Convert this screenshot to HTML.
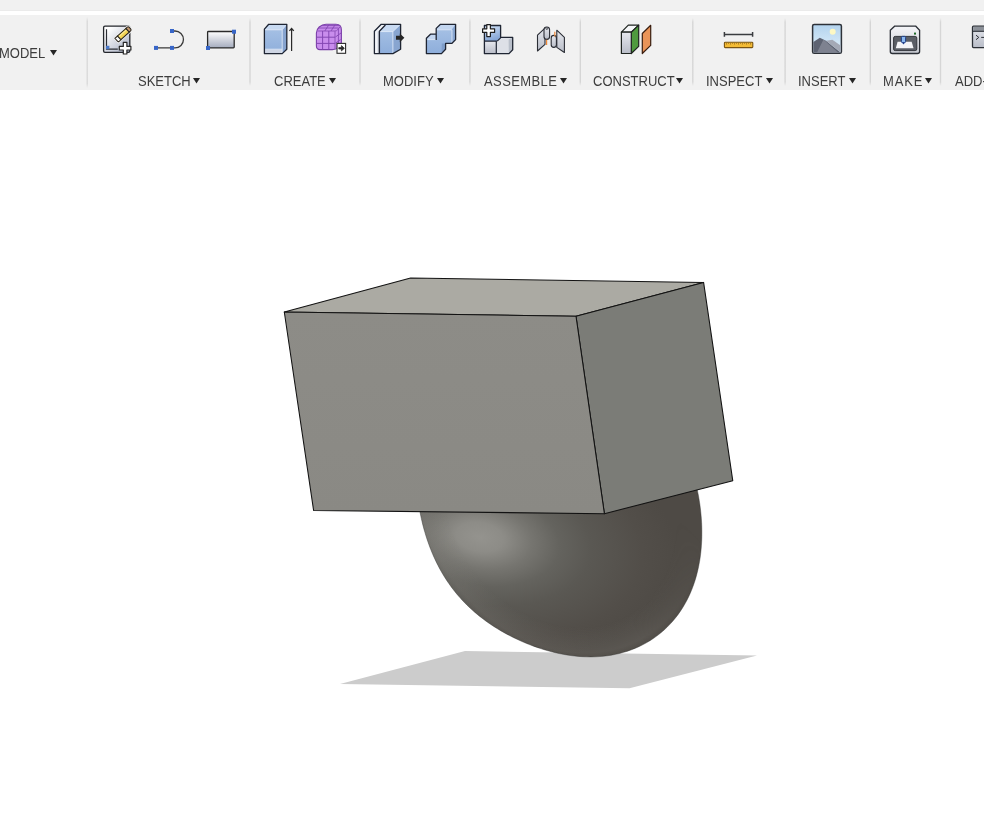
<!DOCTYPE html>
<html><head><meta charset="utf-8">
<style>
html,body{margin:0;padding:0;width:984px;height:833px;overflow:hidden;background:#fff;}
body{position:relative;font-family:"Liberation Sans",sans-serif;}
#top{position:absolute;left:0;top:0;width:984px;height:10px;background:#f1f1f1;border-bottom:1px solid #ebebeb;}
#tb{position:absolute;left:0;top:15px;width:984px;height:75px;background:#f1f1f1;}
.sep{position:absolute;top:17px;width:1px;height:71px;background:#d9d9d9;}
.lbl{position:absolute;top:74px;font-size:13px;color:#3c3c3c;white-space:nowrap;line-height:15px;transform:scaleY(1.1);transform-origin:0 11.5px;}
.tri{position:absolute;width:7px;height:5.5px;background:#262626;clip-path:polygon(0 0,100% 0,50% 100%);}
svg.ic{position:absolute;overflow:visible;}
#scene{position:absolute;left:0;top:0;}
</style></head>
<body>
<div id="top"></div>
<div id="tb"></div>

<svg width="984" height="90" style="position:absolute;left:0;top:0">
  <defs><linearGradient id="gSep" x1="0" y1="0" x2="0" y2="1"><stop offset="0" stop-color="#d6d6d6" stop-opacity="0"/><stop offset="0.06" stop-color="#d6d6d6"/><stop offset="0.94" stop-color="#d6d6d6"/><stop offset="1" stop-color="#d6d6d6" stop-opacity="0"/></linearGradient></defs>
  <rect x="86.6" y="17" width="1.2" height="71" fill="url(#gSep)"/>
  <rect x="249.3" y="18" width="1.4" height="68" fill="url(#gSep)"/>
  <rect x="359.3" y="18" width="1.4" height="68" fill="url(#gSep)"/>
  <rect x="469.2" y="18" width="1.4" height="68" fill="url(#gSep)"/>
  <rect x="579.6" y="18" width="1.4" height="68" fill="url(#gSep)"/>
  <rect x="692.1" y="18" width="1.4" height="68" fill="url(#gSep)"/>
  <rect x="784.4" y="18" width="1.4" height="68" fill="url(#gSep)"/>
  <rect x="869.6" y="18" width="1.4" height="68" fill="url(#gSep)"/>
  <rect x="939.8" y="18" width="1.4" height="68" fill="url(#gSep)"/>
</svg>
<div class="lbl" style="left:-1px;top:46px">MODEL</div><div class="tri" style="left:50px;top:50px"></div>
<div class="lbl" style="left:138px">SKETCH</div><div class="tri" style="left:193px;top:78px"></div>
<div class="lbl" style="left:274px">CREATE</div><div class="tri" style="left:329px;top:78px"></div>
<div class="lbl" style="left:383px">MODIFY</div><div class="tri" style="left:437px;top:78px"></div>
<div class="lbl" style="left:484px;letter-spacing:0.4px">ASSEMBLE</div><div class="tri" style="left:560px;top:78px"></div>
<div class="lbl" style="left:593px">CONSTRUCT</div><div class="tri" style="left:676px;top:78px"></div>
<div class="lbl" style="left:706px">INSPECT</div><div class="tri" style="left:766px;top:78px"></div>
<div class="lbl" style="left:798px">INSERT</div><div class="tri" style="left:849px;top:78px"></div>
<div class="lbl" style="left:883px;letter-spacing:0.9px">MAKE</div><div class="tri" style="left:925px;top:78px"></div>
<div class="lbl" style="left:955px">ADD-INS</div>

<svg id="icons" width="984" height="90" viewBox="0 0 984 90" style="position:absolute;left:0;top:0">
  <defs>
    <linearGradient id="gSk" x1="0" y1="0" x2="1" y2="1">
      <stop offset="0.15" stop-color="#ffffff"/><stop offset="1" stop-color="#a3abc0"/>
    </linearGradient>
    <linearGradient id="gRect" x1="0" y1="0" x2="0" y2="1">
      <stop offset="0" stop-color="#ffffff"/><stop offset="1" stop-color="#a4abbd"/>
    </linearGradient>
    <linearGradient id="gBlueF" x1="0" y1="0" x2="0" y2="1">
      <stop offset="0" stop-color="#a9c3e6"/><stop offset="1" stop-color="#8eaedb"/>
    </linearGradient>
    <linearGradient id="gNcB" x1="0" y1="0" x2="0.3" y2="1"><stop offset="0" stop-color="#d2e2f6"/><stop offset="1" stop-color="#86a6d6"/></linearGradient>
    <linearGradient id="gGray" x1="0" y1="0" x2="0" y2="1">
      <stop offset="0" stop-color="#e6e8ee"/><stop offset="1" stop-color="#b9bdc8"/>
    </linearGradient>
    <linearGradient id="gSky" x1="0" y1="0" x2="0" y2="1">
      <stop offset="0" stop-color="#b3d3ee"/><stop offset="1" stop-color="#e2f1fb"/>
    </linearGradient>
    <linearGradient id="gPrn" x1="0" y1="0" x2="0" y2="1">
      <stop offset="0" stop-color="#f4f5f8"/><stop offset="1" stop-color="#c9ccd4"/>
    </linearGradient>
  </defs>
  <!-- Sketch: create sketch -->
  <g>
    <rect x="103.6" y="26.2" width="26.2" height="26.2" rx="1.4" fill="url(#gSk)" stroke="#24272c" stroke-width="1.3"/>
    <path d="M106.5 29.3 V49.2 H117.8" fill="none" stroke="#2a2d33" stroke-width="1.2"/>
    <rect x="106" y="45.8" width="3.4" height="3.4" fill="#4a78c8"/>
    <g transform="translate(116.6 40.2) rotate(-42)">
      <path d="M0 -2.6 H16.5 Q18 -2.6 18 -1 V1 Q18 2.6 16.5 2.6 H0 Z" fill="none" stroke="#f0f0f0" stroke-width="2.4"/>
      <path d="M3.4 -2.5 H14.8 V2.5 H3.4 Z" fill="#f3d452" stroke="#2a2620" stroke-width="1"/>
      <path d="M4 -1.1 H14.3" stroke="#fbeaa0" stroke-width="1"/>
      <path d="M14.8 -2.5 H16.6 Q18 -2.5 18 -1 V1 Q18 2.5 16.6 2.5 H14.8 Z" fill="#c49a70" stroke="#2a2620" stroke-width="1"/>
      <path d="M3.4 -2.5 V2.5 H1.2 Q0 2.5 0 1.3 V-2.5 Z" fill="#fdfdfd" stroke="#2a2620" stroke-width="1"/>
    </g>
    <path d="M123.3 42.4 h3.6 v4 h4 v3.6 h-4 v4 h-3.6 v-4 h-4 v-3.6 h4 Z" fill="#fff" stroke="#262626" stroke-width="1.2" stroke-linejoin="round"/>
  </g>
  <!-- Line/arc -->
  <g>
    <path d="M156 47.9 H175 A8.45 8.45 0 0 0 175 31 H172" fill="none" stroke="#3a3a3a" stroke-width="1.3"/>
    <rect x="154" y="45.9" width="4" height="4" fill="#3866c8"/>
    <rect x="170" y="45.9" width="4" height="4" fill="#3866c8"/>
    <rect x="170" y="29" width="4" height="4" fill="#3866c8"/>
  </g>
  <!-- Rectangle -->
  <g>
    <rect x="207.6" y="31.5" width="26.6" height="16.4" rx="0.8" fill="url(#gRect)" stroke="#2a2a2a" stroke-width="1.3"/>
    <rect x="206" y="46" width="4" height="4" fill="#3866c8"/>
    <rect x="232" y="29.7" width="4" height="4" fill="#3866c8"/>
  </g>
  <!-- Extrude -->
  <g>
    <path d="M264.4 29.1 L268.7 24.3 H286.8 V49.2 L282.2 53.6 H264.4 Z" fill="url(#gBlueF)"/>
    <path d="M265 29 L268.9 24.9 H286.2 L282.2 29.8 H265 Z" fill="#c8daf2"/>
    <path d="M282.4 29.8 L286.2 25 V49 L282.4 53 Z" fill="#86a3cf"/>
    <path d="M265 49.4 H282.2 V53 H265 Z" fill="#cfd6e4"/>
    <path d="M265 29.8 H282.2 V53 M282.2 29.8 L286.4 24.8 M265 49.2 H282.2" fill="none" stroke="#e6eefa" stroke-width="0.8"/>
    <path d="M264.4 29.1 L268.7 24.3 H286.8 V49.2 L282.2 53.6 H264.4 Z" fill="none" stroke="#1f2533" stroke-width="1.3" stroke-linejoin="round"/>
    <path d="M291.6 51 V28.6 M289.4 30.9 L291.6 28.5 L293.8 30.9" fill="none" stroke="#2a2a2a" stroke-width="1.2"/>
  </g>
  <!-- Form (purple) -->
  <g>
    <path d="M316.4 33 Q316.4 29.6 319.2 27 Q322.4 24.2 326 24.2 H336 Q341.4 24.2 341.4 30 V42 Q341.4 45.6 338.4 47.6 Q335.8 49.6 332.5 49.6 H320 Q316.4 49.6 316.4 46 Z" fill="#c98ded" stroke="#7a3fa8" stroke-width="1.1"/>
    <path d="M317.6 31 H335 Q336.6 31 337.8 29.6 L340.4 26.4" fill="none" stroke="#8a4fb6" stroke-width="0.9"/>
    <path d="M335 31.2 V49" fill="none" stroke="#8a4fb6" stroke-width="0.9"/>
    <path d="M322.6 31 V49.4 M328.8 31 V49.4 M317 37.2 H335 M317 43.4 H335" fill="none" stroke="#8447b3" stroke-width="1"/>
    <path d="M318.8 28 H338.6 M321.6 25.6 H340 M324.8 31 L329 24.6 M331 31 L335.2 24.6" fill="none" stroke="#8447b3" stroke-width="0.9"/>
    <path d="M338.4 28.6 V46.2 M335.4 37 L341 33 M335.4 43.2 L340.6 39.6" fill="none" stroke="#8447b3" stroke-width="0.9"/>
    <rect x="337" y="43.4" width="8.6" height="9.9" fill="#fff" stroke="#2a2a2a" stroke-width="1.1"/>
    <path d="M338.8 47.6 H341.4 V45.6 L344.4 48.3 L341.4 51 V49 H338.8 Z" fill="#2a2a2a" stroke="#2a2a2a" stroke-width="0.7" stroke-linejoin="round"/>
  </g>
  <!-- Press pull -->
  <g>
    <path d="M374.4 31.2 L381.2 24.3 H400.6 V49.2 L392.9 53.6 H374.4 Z" fill="url(#gBlueF)"/>
    <path d="M375 31.2 L381.4 24.9 H385.4 L379.4 31.2 V53 H375 Z" fill="#f3f5f9"/>
    <path d="M377.6 31.4 H379.2 V53 H377.6 Z" fill="#c9ced8"/>
    <path d="M379.8 31.6 L385.6 25 H400 L393 31.6 Z" fill="#c8daf2"/>
    <path d="M393 31.6 L400 25 V49 L393 53 Z" fill="#88a5d0"/>
    <path d="M380 31.6 H392.9 V53 M392.9 31.6 L399.8 25" fill="none" stroke="#e6eefa" stroke-width="0.8"/>
    <path d="M374.4 31.2 L381.2 24.3 H400.6 V49.2 L392.9 53.6 H374.4 Z M379.4 53.4 V31.2 L385.4 25" fill="none" stroke="#1f2533" stroke-width="1.3" stroke-linejoin="round"/>
    <path d="M396 35.8 H399.8 V33.4 L404.4 37.8 L399.8 42.2 V39.8 H396 Z" fill="#262626"/>
  </g>
  <!-- Combine -->
  <g>
    <path id="cmb" d="M426.4 38.3 L430.5 34.2 H436.2 V28.4 L440.5 24.3 H455.6 V39.6 L452 43.3 H445.6 V49.2 L441.5 53.6 H426.4 Z" fill="url(#gBlueF)"/>
    <path d="M427 38.2 L430.6 34.8 H436.2 V39.6 H427 Z" fill="#c3d6f0"/>
    <path d="M436.8 28.6 L440.6 24.9 H455 L451.6 29.6 H436.8 Z" fill="#c3d6f0"/>
    <path d="M452 29.8 L455.2 25 V39.4 L452 43 Z" fill="#88a6d1"/>
    <path d="M441.8 43.4 H445.4 V49 L441.6 53 Z" fill="#7f9dc9"/>
    <path d="M427.3 39.6 H436.2 M436.9 29.8 H451.8 M452 30 V43" fill="none" stroke="#e4eefa" stroke-width="0.8"/>
    <path d="M426.4 38.3 L430.5 34.2 H436.2 V28.4 L440.5 24.3 H455.6 V39.6 L452 43.3 H445.6 V49.2 L441.5 53.6 H426.4 Z M436.2 34.2 V40" fill="none" stroke="#1f2533" stroke-width="1.3" stroke-linejoin="round"/>
  </g>
  <!-- New component -->
  <g>
    <path d="M484.4 25.5 H500.6 V41 L497.2 41.2 H484.4 Z" fill="url(#gNcB)"/>
    <path d="M484.4 41.2 H496.3 V53.6 H484.4 Z" fill="url(#gGray)"/>
    <path d="M496.3 41.2 L500.6 37.4 H512.7 V49.7 L509 53.6 H496.3 Z" fill="#dde0e7"/>
    <path d="M508.6 39.4 L512.2 37.8 V49.5 L508.8 52.6 Z" fill="#b9bfca"/>
    <path d="M484.4 41.2 H496.3 V53.6 M497.2 41.2 L500.6 37.8" fill="none" stroke="#1f2533" stroke-width="1.2"/>
    <path d="M484.4 25.5 H500.6 V37.4 H512.7 V49.7 L509 53.6 H484.4 Z" fill="none" stroke="#1f2533" stroke-width="1.3" stroke-linejoin="round"/>
    <path d="M486.8 24.6 h3.6 v4.2 h4.2 v3.6 h-4.2 v4.2 h-3.6 v-4.2 h-4.2 v-3.6 h4.2 Z" fill="#fff" stroke="#1f1f1f" stroke-width="1.2" stroke-linejoin="round"/>
  </g>
  <!-- Joint -->
  <g stroke="#2a2d35" stroke-width="1.1" stroke-linejoin="round">
    <path d="M537.5 35.2 L545 28.2 V44.4 L537.5 51 Z" fill="url(#gGray)"/>
    <rect x="544" y="27" width="5.6" height="12.4" rx="2.8" fill="url(#gGray)"/>
    <ellipse cx="546.8" cy="28.6" rx="1" ry="0.8" fill="#fff" stroke="#2a2d35" stroke-width="0.8"/>
    <path d="M546.6 39.8 V44.9" stroke="#f08a3a" stroke-width="1.2"/>
    <path d="M556.8 30.2 L564.4 37.3 V52.5 L556.8 47.4 Z" fill="url(#gGray)"/>
    <rect x="551.2" y="35.4" width="5.2" height="12" rx="2.6" fill="url(#gGray)"/>
    <path d="M554.8 31.8 V36.6" stroke="#f08a3a" stroke-width="1.2"/>
  </g>
  <!-- Construct -->
  <g stroke="#1f2420" stroke-width="1.2" stroke-linejoin="round">
    <path d="M621.4 32.2 L628.3 25.1 H638.7 L631.3 32.2 Z" fill="#f6f7f9"/>
    <path d="M631.3 32.2 L638.7 25.1 V46.4 L631.3 53.5 Z" fill="#4f9a3e"/>
    <path d="M621.4 32.2 H631.3 V53.5 H621.4 Z" fill="url(#gGray)"/>
    <path d="M642.3 33.5 L650.7 25.3 V45.4 L642.3 53.5 Z" fill="#ea9458" stroke="#3a1e10"/>
  </g>
  <!-- Measure -->
  <g>
    <path d="M724.4 34.4 H752.6 M724.4 32 V36.8 M752.6 32 V36.8" fill="none" stroke="#3a3c40" stroke-width="1.5"/>
    <rect x="724.4" y="42.3" width="28.4" height="5.3" rx="0.8" fill="#f3bb34" stroke="#7a5410" stroke-width="1.1"/>
    <path d="M726.5 42.8 V44.6 M728.5 42.8 V44 M730.5 42.8 V44.6 M732.5 42.8 V44 M734.5 42.8 V44.6 M736.5 42.8 V44 M738.5 42.8 V44.6 M740.5 42.8 V44 M742.5 42.8 V44.6 M744.5 42.8 V44 M746.5 42.8 V44.6 M748.5 42.8 V44 M750.5 42.8 V44.6" stroke="#9a6c18" stroke-width="0.7"/>
  </g>
  <!-- Insert image -->
  <g>
    <rect x="812.6" y="24.5" width="28.8" height="28.8" rx="1.6" fill="url(#gSky)" stroke="#2d3138" stroke-width="1.5"/>
    <circle cx="832.7" cy="31.8" r="3" fill="#fdf8c4"/>
    <path d="M813.4 42 L819.8 37.8 L826 40.8 L840.6 52.6 H813.4 Z" fill="#5e6372"/>
    <path d="M826 40.8 L832.4 39.8 L840.6 45.6 V52.6 Z" fill="#a4a9b6"/>
    <path d="M823.5 39.5 L838 52.6 H817 Z" fill="#8b909d" opacity="0.7"/>
  </g>
  <!-- Make (3D print) -->
  <g>
    <path d="M890.3 30.3 L894.6 26.2 H915.8 L919.6 30.3 V51.4 Q919.6 53.5 917.4 53.5 H892.4 Q890.3 53.5 890.3 51.4 Z" fill="url(#gPrn)" stroke="#2b2f36" stroke-width="1.3"/>
    <rect x="893.6" y="36.4" width="23.2" height="14.2" rx="1.6" fill="#5a5e66" stroke="#34373d" stroke-width="1"/>
    <path d="M895.8 48.2 L897.6 41.8 H911.6 L913.6 48.2 Z" fill="#f4f5f8"/>
    <rect x="901.4" y="36.4" width="4.2" height="6.2" rx="1" fill="#8ab8ee" stroke="#1d3d8a" stroke-width="1"/>
    <path d="M902 42.4 L903.5 44.6 L905 42.4 Z" fill="#1d3d8a"/>
    <rect x="914" y="32.6" width="2" height="2" fill="#1e6a2a"/>
  </g>
  <!-- Add-ins -->
  <g>
    <rect x="972.5" y="26.2" width="20" height="21.4" rx="1" fill="url(#gGray)" stroke="#2b2f36" stroke-width="1.3"/>
    <rect x="973.2" y="26.9" width="19" height="4.2" fill="#8c9199"/>
    <path d="M972.5 31.3 H992" stroke="#2b2f36" stroke-width="1.1"/>
    <path d="M976 35.2 L978.8 37.4 L976 39.7" fill="none" stroke="#2b2f36" stroke-width="1"/>
    <path d="M981.2 37.4 H986" stroke="#2b2f36" stroke-width="1"/>
  </g>
</svg>

<!-- scene -->
<svg id="scene" width="984" height="833" viewBox="0 0 984 833" style="top:0">
  <defs>
    
    <radialGradient id="rim" gradientUnits="userSpaceOnUse" cx="0" cy="0" r="1" gradientTransform="translate(480 537) rotate(10) scale(200 120)">
      <stop offset="0" stop-color="#94938e"/>
      <stop offset="0.12" stop-color="#8d8c87"/>
      <stop offset="0.26" stop-color="#767570"/>
      <stop offset="0.4" stop-color="#64635e"/>
      <stop offset="0.56" stop-color="#5a5853"/>
      <stop offset="0.82" stop-color="#524e49"/>
      <stop offset="1" stop-color="#4e4a45"/>
    </radialGradient>
    <radialGradient id="hl" gradientUnits="userSpaceOnUse" cx="0" cy="0" r="1" gradientTransform="translate(480 537) rotate(12) scale(150 80)">
      <stop offset="0" stop-color="#9a9994" stop-opacity="1"/>
      <stop offset="0.35" stop-color="#8c8b86" stop-opacity="0.75"/>
      <stop offset="1" stop-color="#6a6864" stop-opacity="0"/>
    </radialGradient>
    <radialGradient id="rimL" gradientUnits="userSpaceOnUse" cx="0" cy="0" r="1" gradientTransform="translate(559 507.5) rotate(51) scale(160.3 132.3)">
      <stop offset="0.8" stop-color="#8a8883" stop-opacity="0"/>
      <stop offset="0.97" stop-color="#8a8883" stop-opacity="0.2"/>
      <stop offset="1" stop-color="#8a8883" stop-opacity="0.1"/>
    </radialGradient>
    <linearGradient id="mkG" gradientUnits="userSpaceOnUse" x1="700" y1="540" x2="560" y2="660">
      <stop offset="0" stop-color="#000"/>
      <stop offset="0.6" stop-color="#fff"/>
      <stop offset="1" stop-color="#fff"/>
    </linearGradient>
    <mask id="mkR" maskUnits="userSpaceOnUse" x="380" y="440" width="360" height="240"><rect x="380" y="440" width="360" height="240" fill="url(#mkG)"/></mask>
    <linearGradient id="front" x1="0" y1="0" x2="0" y2="1">
      <stop offset="0" stop-color="#8d8c87"/>
      <stop offset="1" stop-color="#8a8984"/>
    </linearGradient>
  </defs>
  <polygon points="340,684 465,651 757,655.5 629.5,688.3" fill="#cccccc"/>
  <path d="M700.30,507.72 L700.72,511.43 L701.09,515.16 L701.38,518.91 L701.61,522.69 L701.77,526.49 L701.85,530.32 L701.86,534.16 L701.80,538.03 L701.65,541.92 L701.42,545.83 L701.09,549.75 L700.68,553.69 L700.16,557.64 L699.55,561.60 L698.82,565.56 L697.99,569.52 L697.03,573.47 L695.96,577.41 L694.77,581.33 L693.44,585.23 L691.99,589.10 L690.40,592.93 L688.67,596.71 L686.81,600.44 L684.81,604.11 L682.66,607.70 L680.38,611.22 L677.96,614.66 L675.40,617.99 L672.70,621.23 L669.87,624.35 L666.92,627.36 L663.84,630.24 L660.64,632.99 L657.33,635.61 L653.91,638.08 L650.39,640.41 L646.78,642.58 L643.08,644.60 L639.30,646.47 L635.46,648.18 L631.56,649.73 L627.60,651.13 L623.60,652.36 L619.56,653.45 L615.49,654.37 L611.40,655.15 L607.30,655.78 L603.20,656.27 L599.09,656.61 L594.99,656.83 L590.91,656.91 L586.84,656.87 L582.79,656.71 L578.78,656.43 L574.79,656.05 L570.83,655.56 L566.91,654.98 L563.04,654.31 L559.20,653.55 L555.40,652.70 L551.65,651.78 L547.94,650.79 L544.27,649.73 L540.65,648.60 L537.07,647.40 L533.54,646.15 L530.05,644.84 L526.61,643.47 L523.21,642.05 L519.85,640.57 L516.53,639.04 L513.25,637.46 L510.02,635.83 L506.83,634.15 L503.68,632.41 L500.58,630.63 L497.51,628.79 L494.49,626.90 L491.51,624.95 L488.58,622.96 L485.70,620.90 L482.86,618.80 L480.07,616.64 L477.33,614.42 L474.64,612.15 L472.00,609.82 L469.42,607.43 L466.89,604.99 L464.42,602.50 L462.01,599.95 L459.66,597.35 L457.37,594.69 L455.15,591.98 L452.98,589.22 L450.88,586.42 L448.85,583.56 L446.88,580.66 L444.97,577.72 L443.14,574.73 L441.36,571.70 L439.66,568.63 L438.01,565.53 L436.43,562.38 L434.92,559.20 L433.46,555.99 L432.07,552.74 L430.74,549.46 L429.47,546.15 L428.25,542.81 L427.09,539.44 L426.00,536.04 L424.95,532.60 L423.96,529.14 L423.03,525.65 L422.16,522.13 L421.34,518.57 L420.57,514.99 L419.87,511.37 L419.22,507.72 L418.64,504.04 L418.11,500.33 L417.66,496.58 L417.27,492.81 L416.95,489.00 L416.71,485.15 L416.54,481.28 L416.46,477.38 L416.47,473.46 L416.57,469.51 L416.77,465.53 L417.07,461.54 L417.48,457.54 L418.00,453.52 L418.63,449.50 L419.39,445.48 L420.28,441.46 L421.30,437.46 L422.45,433.48 L423.75,429.52 L425.18,425.60 L426.76,421.72 L428.49,417.89 L430.37,414.12 L432.39,410.42 L434.57,406.80 L436.89,403.26 L439.36,399.82 L441.97,396.48 L444.73,393.25 L447.62,390.15 L450.65,387.16 L453.80,384.31 L457.07,381.61 L460.46,379.04 L463.95,376.63 L467.54,374.36 L471.23,372.26 L474.99,370.31 L478.83,368.53 L482.74,366.91 L486.70,365.45 L490.72,364.15 L494.77,363.01 L498.85,362.02 L502.95,361.19 L507.07,360.51 L511.19,359.97 L515.31,359.57 L519.43,359.31 L523.54,359.18 L527.62,359.17 L531.69,359.28 L535.72,359.50 L539.73,359.83 L543.70,360.25 L547.63,360.77 L551.53,361.37 L555.38,362.06 L559.20,362.82 L562.97,363.65 L566.70,364.56 L570.39,365.52 L574.04,366.54 L577.64,367.62 L581.21,368.75 L584.74,369.93 L588.22,371.16 L591.68,372.44 L595.09,373.77 L598.47,375.14 L601.81,376.56 L605.12,378.03 L608.40,379.55 L611.64,381.11 L614.85,382.72 L618.03,384.39 L621.16,386.10 L624.27,387.88 L627.34,389.70 L630.36,391.59 L633.35,393.53 L636.30,395.54 L639.20,397.60 L642.06,399.73 L644.87,401.92 L647.63,404.18 L650.34,406.50 L652.98,408.89 L655.58,411.34 L658.11,413.86 L660.57,416.44 L662.97,419.09 L665.31,421.80 L667.57,424.56 L669.76,427.39 L671.88,430.28 L673.93,433.22 L675.90,436.21 L677.79,439.25 L679.60,442.35 L681.34,445.49 L683.00,448.67 L684.59,451.89 L686.10,455.16 L687.53,458.46 L688.89,461.80 L690.18,465.17 L691.39,468.57 L692.53,472.00 L693.60,475.45 L694.61,478.94 L695.54,482.45 L696.41,485.99 L697.22,489.55 L697.96,493.14 L698.64,496.75 L699.26,500.38 L699.81,504.04Z" fill="url(#rim)"/>
  <path d="M700.30,507.72 L700.72,511.43 L701.09,515.16 L701.38,518.91 L701.61,522.69 L701.77,526.49 L701.85,530.32 L701.86,534.16 L701.80,538.03 L701.65,541.92 L701.42,545.83 L701.09,549.75 L700.68,553.69 L700.16,557.64 L699.55,561.60 L698.82,565.56 L697.99,569.52 L697.03,573.47 L695.96,577.41 L694.77,581.33 L693.44,585.23 L691.99,589.10 L690.40,592.93 L688.67,596.71 L686.81,600.44 L684.81,604.11 L682.66,607.70 L680.38,611.22 L677.96,614.66 L675.40,617.99 L672.70,621.23 L669.87,624.35 L666.92,627.36 L663.84,630.24 L660.64,632.99 L657.33,635.61 L653.91,638.08 L650.39,640.41 L646.78,642.58 L643.08,644.60 L639.30,646.47 L635.46,648.18 L631.56,649.73 L627.60,651.13 L623.60,652.36 L619.56,653.45 L615.49,654.37 L611.40,655.15 L607.30,655.78 L603.20,656.27 L599.09,656.61 L594.99,656.83 L590.91,656.91 L586.84,656.87 L582.79,656.71 L578.78,656.43 L574.79,656.05 L570.83,655.56 L566.91,654.98 L563.04,654.31 L559.20,653.55 L555.40,652.70 L551.65,651.78 L547.94,650.79 L544.27,649.73 L540.65,648.60 L537.07,647.40 L533.54,646.15 L530.05,644.84 L526.61,643.47 L523.21,642.05 L519.85,640.57 L516.53,639.04 L513.25,637.46 L510.02,635.83 L506.83,634.15 L503.68,632.41 L500.58,630.63 L497.51,628.79 L494.49,626.90 L491.51,624.95 L488.58,622.96 L485.70,620.90 L482.86,618.80 L480.07,616.64 L477.33,614.42 L474.64,612.15 L472.00,609.82 L469.42,607.43 L466.89,604.99 L464.42,602.50 L462.01,599.95 L459.66,597.35 L457.37,594.69 L455.15,591.98 L452.98,589.22 L450.88,586.42 L448.85,583.56 L446.88,580.66 L444.97,577.72 L443.14,574.73 L441.36,571.70 L439.66,568.63 L438.01,565.53 L436.43,562.38 L434.92,559.20 L433.46,555.99 L432.07,552.74 L430.74,549.46 L429.47,546.15 L428.25,542.81 L427.09,539.44 L426.00,536.04 L424.95,532.60 L423.96,529.14 L423.03,525.65 L422.16,522.13 L421.34,518.57 L420.57,514.99 L419.87,511.37 L419.22,507.72 L418.64,504.04 L418.11,500.33 L417.66,496.58 L417.27,492.81 L416.95,489.00 L416.71,485.15 L416.54,481.28 L416.46,477.38 L416.47,473.46 L416.57,469.51 L416.77,465.53 L417.07,461.54 L417.48,457.54 L418.00,453.52 L418.63,449.50 L419.39,445.48 L420.28,441.46 L421.30,437.46 L422.45,433.48 L423.75,429.52 L425.18,425.60 L426.76,421.72 L428.49,417.89 L430.37,414.12 L432.39,410.42 L434.57,406.80 L436.89,403.26 L439.36,399.82 L441.97,396.48 L444.73,393.25 L447.62,390.15 L450.65,387.16 L453.80,384.31 L457.07,381.61 L460.46,379.04 L463.95,376.63 L467.54,374.36 L471.23,372.26 L474.99,370.31 L478.83,368.53 L482.74,366.91 L486.70,365.45 L490.72,364.15 L494.77,363.01 L498.85,362.02 L502.95,361.19 L507.07,360.51 L511.19,359.97 L515.31,359.57 L519.43,359.31 L523.54,359.18 L527.62,359.17 L531.69,359.28 L535.72,359.50 L539.73,359.83 L543.70,360.25 L547.63,360.77 L551.53,361.37 L555.38,362.06 L559.20,362.82 L562.97,363.65 L566.70,364.56 L570.39,365.52 L574.04,366.54 L577.64,367.62 L581.21,368.75 L584.74,369.93 L588.22,371.16 L591.68,372.44 L595.09,373.77 L598.47,375.14 L601.81,376.56 L605.12,378.03 L608.40,379.55 L611.64,381.11 L614.85,382.72 L618.03,384.39 L621.16,386.10 L624.27,387.88 L627.34,389.70 L630.36,391.59 L633.35,393.53 L636.30,395.54 L639.20,397.60 L642.06,399.73 L644.87,401.92 L647.63,404.18 L650.34,406.50 L652.98,408.89 L655.58,411.34 L658.11,413.86 L660.57,416.44 L662.97,419.09 L665.31,421.80 L667.57,424.56 L669.76,427.39 L671.88,430.28 L673.93,433.22 L675.90,436.21 L677.79,439.25 L679.60,442.35 L681.34,445.49 L683.00,448.67 L684.59,451.89 L686.10,455.16 L687.53,458.46 L688.89,461.80 L690.18,465.17 L691.39,468.57 L692.53,472.00 L693.60,475.45 L694.61,478.94 L695.54,482.45 L696.41,485.99 L697.22,489.55 L697.96,493.14 L698.64,496.75 L699.26,500.38 L699.81,504.04Z" fill="url(#rimL)" mask="url(#mkR)"/>
  <path d="M700.30,507.72 L700.72,511.43 L701.09,515.16 L701.38,518.91 L701.61,522.69 L701.77,526.49 L701.85,530.32 L701.86,534.16 L701.80,538.03 L701.65,541.92 L701.42,545.83 L701.09,549.75 L700.68,553.69 L700.16,557.64 L699.55,561.60 L698.82,565.56 L697.99,569.52 L697.03,573.47 L695.96,577.41 L694.77,581.33 L693.44,585.23 L691.99,589.10 L690.40,592.93 L688.67,596.71 L686.81,600.44 L684.81,604.11 L682.66,607.70 L680.38,611.22 L677.96,614.66 L675.40,617.99 L672.70,621.23 L669.87,624.35 L666.92,627.36 L663.84,630.24 L660.64,632.99 L657.33,635.61 L653.91,638.08 L650.39,640.41 L646.78,642.58 L643.08,644.60 L639.30,646.47 L635.46,648.18 L631.56,649.73 L627.60,651.13 L623.60,652.36 L619.56,653.45 L615.49,654.37 L611.40,655.15 L607.30,655.78 L603.20,656.27 L599.09,656.61 L594.99,656.83 L590.91,656.91 L586.84,656.87 L582.79,656.71 L578.78,656.43 L574.79,656.05 L570.83,655.56 L566.91,654.98 L563.04,654.31 L559.20,653.55 L555.40,652.70 L551.65,651.78 L547.94,650.79 L544.27,649.73 L540.65,648.60 L537.07,647.40 L533.54,646.15 L530.05,644.84 L526.61,643.47 L523.21,642.05 L519.85,640.57 L516.53,639.04 L513.25,637.46 L510.02,635.83 L506.83,634.15 L503.68,632.41 L500.58,630.63 L497.51,628.79 L494.49,626.90 L491.51,624.95 L488.58,622.96 L485.70,620.90 L482.86,618.80 L480.07,616.64 L477.33,614.42 L474.64,612.15 L472.00,609.82 L469.42,607.43 L466.89,604.99 L464.42,602.50 L462.01,599.95 L459.66,597.35 L457.37,594.69 L455.15,591.98 L452.98,589.22 L450.88,586.42 L448.85,583.56 L446.88,580.66 L444.97,577.72 L443.14,574.73 L441.36,571.70 L439.66,568.63 L438.01,565.53 L436.43,562.38 L434.92,559.20 L433.46,555.99 L432.07,552.74 L430.74,549.46 L429.47,546.15 L428.25,542.81 L427.09,539.44 L426.00,536.04 L424.95,532.60 L423.96,529.14 L423.03,525.65 L422.16,522.13 L421.34,518.57 L420.57,514.99 L419.87,511.37 L419.22,507.72 L418.64,504.04 L418.11,500.33 L417.66,496.58 L417.27,492.81 L416.95,489.00 L416.71,485.15 L416.54,481.28 L416.46,477.38 L416.47,473.46 L416.57,469.51 L416.77,465.53 L417.07,461.54 L417.48,457.54 L418.00,453.52 L418.63,449.50 L419.39,445.48 L420.28,441.46 L421.30,437.46 L422.45,433.48 L423.75,429.52 L425.18,425.60 L426.76,421.72 L428.49,417.89 L430.37,414.12 L432.39,410.42 L434.57,406.80 L436.89,403.26 L439.36,399.82 L441.97,396.48 L444.73,393.25 L447.62,390.15 L450.65,387.16 L453.80,384.31 L457.07,381.61 L460.46,379.04 L463.95,376.63 L467.54,374.36 L471.23,372.26 L474.99,370.31 L478.83,368.53 L482.74,366.91 L486.70,365.45 L490.72,364.15 L494.77,363.01 L498.85,362.02 L502.95,361.19 L507.07,360.51 L511.19,359.97 L515.31,359.57 L519.43,359.31 L523.54,359.18 L527.62,359.17 L531.69,359.28 L535.72,359.50 L539.73,359.83 L543.70,360.25 L547.63,360.77 L551.53,361.37 L555.38,362.06 L559.20,362.82 L562.97,363.65 L566.70,364.56 L570.39,365.52 L574.04,366.54 L577.64,367.62 L581.21,368.75 L584.74,369.93 L588.22,371.16 L591.68,372.44 L595.09,373.77 L598.47,375.14 L601.81,376.56 L605.12,378.03 L608.40,379.55 L611.64,381.11 L614.85,382.72 L618.03,384.39 L621.16,386.10 L624.27,387.88 L627.34,389.70 L630.36,391.59 L633.35,393.53 L636.30,395.54 L639.20,397.60 L642.06,399.73 L644.87,401.92 L647.63,404.18 L650.34,406.50 L652.98,408.89 L655.58,411.34 L658.11,413.86 L660.57,416.44 L662.97,419.09 L665.31,421.80 L667.57,424.56 L669.76,427.39 L671.88,430.28 L673.93,433.22 L675.90,436.21 L677.79,439.25 L679.60,442.35 L681.34,445.49 L683.00,448.67 L684.59,451.89 L686.10,455.16 L687.53,458.46 L688.89,461.80 L690.18,465.17 L691.39,468.57 L692.53,472.00 L693.60,475.45 L694.61,478.94 L695.54,482.45 L696.41,485.99 L697.22,489.55 L697.96,493.14 L698.64,496.75 L699.26,500.38 L699.81,504.04Z" fill="none" stroke="#2e2c2a" stroke-width="0.7" stroke-opacity="0.55"/>
  <polygon points="284.3,312 410.6,278.1 703.6,282.4 576,316.3" fill="#abaaa3" stroke="#121212" stroke-width="1.05" stroke-linejoin="round"/>
  <polygon points="576,316.3 703.6,282.4 732.8,480.8 604.4,513.7" fill="#7b7c77" stroke="#121212" stroke-width="1.05" stroke-linejoin="round"/>
  <polygon points="284.3,312 576,316.3 604.4,513.7 313.6,510.4" fill="url(#front)" stroke="#121212" stroke-width="1.05" stroke-linejoin="round"/>
</svg>
</body></html>
